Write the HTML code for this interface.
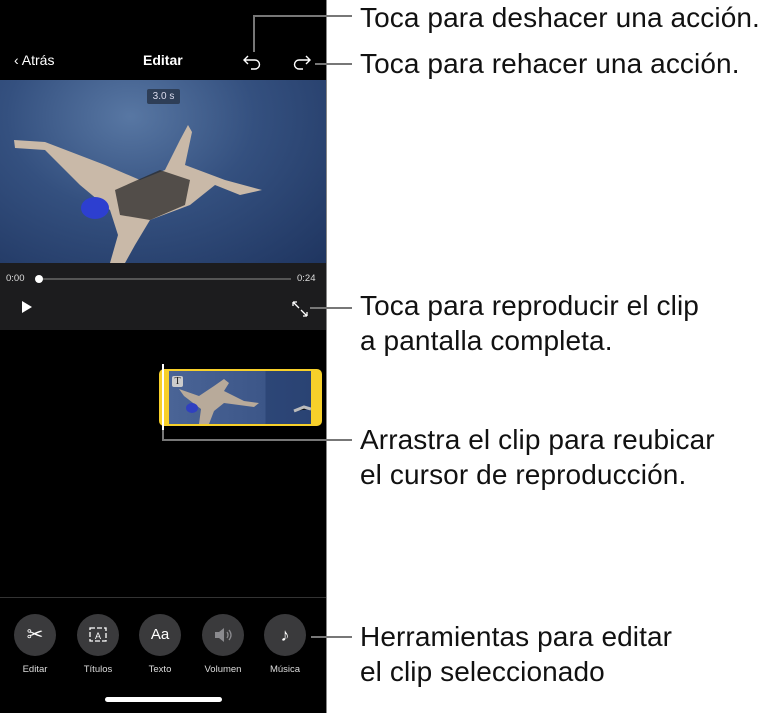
<!DOCTYPE html>
<html><head><meta charset="utf-8"><style>
*{margin:0;padding:0;box-sizing:border-box}
body{width:774px;height:713px;background:#fff;position:relative;overflow:hidden;font-family:"Liberation Sans",sans-serif}
.ph{position:absolute;left:0;top:0;width:327px;height:713px;background:#000;border-right:1px solid #888}
.a{position:absolute}
.co{position:absolute;left:360px;font-size:28px;letter-spacing:0.1px;color:#111;line-height:35px;white-space:nowrap}
.ln{position:absolute;background:#777}
.c{position:absolute;width:42px;height:42px;border-radius:50%;background:#3a3a3c;top:614px;color:#fff;text-align:center;line-height:42px}
.lb{position:absolute;top:664px;width:60px;text-align:center;color:#ddd;font-size:9.5px}
</style></head><body>
<div class="ph"></div>
<div class="a" style="left:14px;top:52px;color:#fff;font-size:14px">&lsaquo; Atrás</div>
<div class="a" style="left:143px;top:52px;color:#fff;font-size:14px;font-weight:bold">Editar</div>
<svg class="a" style="left:240px;top:50px" width="90" height="24" viewBox="0 0 90 24" fill="none" stroke="#fff" stroke-width="1.4">
<path d="M8 6 L4 10 L8 14 M4 10 H15 A4.5 4.5 0 0 1 15 19 H11"/>
<path d="M66 6 L70 10 L66 14 M70 10 H59 A4.5 4.5 0 0 0 59 19 H63"/>
</svg>
<div class="a" style="left:0;top:80px;width:326px;height:183px;background:radial-gradient(ellipse at 40% 20%,#5877a3 0%,#34507f 45%,#1f3560 100%)"></div>
<svg class="a" style="left:0;top:80px" width="326" height="183" viewBox="0 0 326 183">
<path d="M14 60 L45 62 L105 85 L140 100 L165 90 L180 60 L188 45 L192 52 L185 85 L225 100 L262 110 L240 115 L215 105 L190 125 L150 140 L135 165 L125 183 L110 183 L118 155 L110 130 L80 105 L45 70 L15 68 Z" fill="#c9b9a8"/>
<path d="M115 110 L160 90 L190 100 L185 125 L150 140 L120 135 Z" fill="#2a2a2a" opacity=".75"/>
<ellipse cx="95" cy="128" rx="14" ry="11" fill="#2d3fd0"/>
</svg>
<div class="a" style="left:147px;top:89px;width:33px;height:15px;background:#2e3e57;border-radius:2px;color:#dde;font-size:10px;text-align:center;line-height:15px">3.0 s</div>
<div class="a" style="left:0;top:263px;width:326px;height:67px;background:#1c1c1e"></div>
<div class="a" style="left:6px;top:273px;color:#ddd;font-size:9.5px">0:00</div>
<div class="a" style="left:297px;top:273px;color:#ddd;font-size:9.5px">0:24</div>
<div class="a" style="left:39px;top:278px;width:252px;height:2px;background:#555"></div>
<div class="a" style="left:35px;top:275px;width:8px;height:8px;border-radius:50%;background:#fff"></div>
<svg class="a" style="left:20px;top:300px" width="14" height="14"><path d="M2 1 L12 7 L2 13Z" fill="#fff"/></svg>
<svg class="a" style="left:291px;top:300px" width="18" height="18" fill="none" stroke="#fff" stroke-width="1.3"><path d="M2 2 L8 8 M2 2 H6 M2 2 V6 M16 16 L10 10 M16 16 H12 M16 16 V12"/></svg>
<div class="a" style="left:159px;top:369px;width:163px;height:57px;background:#f7d02a;border-radius:5px"></div>
<div class="a" style="left:169px;top:371px;width:142px;height:53px;background:linear-gradient(90deg,#4a6496 0%,#3c5688 68%,#2d4677 68%,#2a4373 100%)"></div>
<svg class="a" style="left:169px;top:371px" width="142" height="53"><path d="M10 18 L30 25 L45 15 L55 8 L60 12 L55 20 L75 30 L90 32 L85 36 L70 34 L55 32 L45 40 L40 53 L30 53 L32 38 L15 25Z" fill="#b8aa9a"/><ellipse cx="23" cy="37" rx="6" ry="5" fill="#3040c0"/><path d="M125 40 L135 36 L142 38" stroke="#bbb" stroke-width="3"/></svg>
<div class="a" style="left:172px;top:376px;width:11px;height:11px;background:#ccc;border-radius:2px;font-size:10px;line-height:11px;text-align:center;font-family:'Liberation Serif',serif;color:#222">T</div>
<div class="a" style="left:162px;top:364px;width:2px;height:66px;background:#fff"></div>
<div class="a" style="left:0;top:597px;width:326px;height:1px;background:#333"></div>
<div class="c" style="left:14px;font-size:20px">✂</div>
<div class="c" style="left:77px"><svg width="42" height="42" fill="none" stroke="#fff" stroke-width="1.3"><rect x="13" y="14" width="16" height="13" stroke-dasharray="5 2"/><text x="21" y="25" fill="#fff" stroke="none" font-size="9" text-anchor="middle" font-family="Liberation Sans">A</text></svg></div>
<div class="c" style="left:139px;font-size:15px">Aa</div>
<div class="c" style="left:202px"><svg width="42" height="42"><path d="M13 18 H17 L22 14 V28 L17 24 H13 Z" fill="#8a8a8e"/><path d="M25 18 Q27 21 25 24 M27 16 Q31 21 27 26" stroke="#8a8a8e" stroke-width="1.3" fill="none"/></svg></div>
<div class="c" style="left:264px;font-size:18px;font-weight:bold">♪</div>
<div class="lb" style="left:5px">Editar</div>
<div class="lb" style="left:68px">Títulos</div>
<div class="lb" style="left:130px">Texto</div>
<div class="lb" style="left:193px">Volumen</div>
<div class="lb" style="left:255px">Música</div>
<div class="a" style="left:105px;top:697px;width:117px;height:5px;border-radius:3px;background:#fff"></div>
<div class="ln" style="left:253px;top:15px;width:2px;height:37px"></div>
<div class="ln" style="left:253px;top:15px;width:99px;height:2px"></div>
<div class="ln" style="left:315px;top:63px;width:37px;height:2px"></div>
<div class="ln" style="left:310px;top:307px;width:42px;height:2px"></div>
<div class="ln" style="left:162px;top:430px;width:2px;height:11px"></div>
<div class="ln" style="left:162px;top:439px;width:190px;height:2px"></div>
<div class="ln" style="left:311px;top:636px;width:41px;height:2px"></div>
<div class="co" style="top:0px">Toca para deshacer una acción.</div>
<div class="co" style="top:46px">Toca para rehacer una acción.</div>
<div class="co" style="top:288px">Toca para reproducir el clip<br>a pantalla completa.</div>
<div class="co" style="top:422px">Arrastra el clip para reubicar<br>el cursor de reproducción.</div>
<div class="co" style="top:619px">Herramientas para editar<br>el clip seleccionado</div>
</body></html>
